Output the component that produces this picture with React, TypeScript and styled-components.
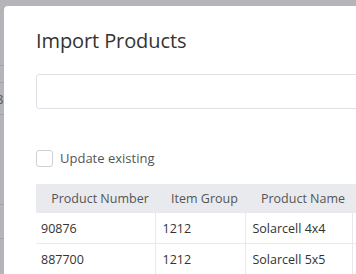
import React from "react";
import styled, { createGlobalStyle } from "styled-components";

const GlobalStyle = createGlobalStyle`
  html, body {
    margin: 0;
    padding: 0;
    overflow: hidden;
    background: #b5b5b9;
    font-family: "Open Sans", "Noto Sans", sans-serif;
  }
`;

const Screen = styled.div`
  position: relative;
  width: 356px;
  height: 274px;
  overflow: hidden;
`;

// page behind the overlay, only a strip of it is visible
const PageBehind = styled.div`
  display: flex;
  flex-direction: column;
  width: 100%;
`;

const PageRow = styled.div<{ $h: number }>`
  height: ${({ $h }) => $h}px;
  border-bottom: 1px solid #a4a4a8;
  box-sizing: border-box;
  display: flex;
  align-items: center;
  font-size: 13px;
  color: #55555a;
  overflow: hidden;
`;

const PageCell = styled.span`
  margin-left: -4px;
`;

const Modal = styled.div`
  position: absolute;
  left: 4px;
  top: 6px;
  width: 720px;
  height: 400px;
  background: #fff;
  border-radius: 4px 0 0 0;
  padding: 0 0 0 32px;
  box-sizing: border-box;
  display: flex;
  flex-direction: column;
  align-items: stretch;
`;

const Title = styled.h2`
  margin: 21px 0 0;
  font-size: 20px;
  line-height: 28px;
  font-weight: 400;
  color: #333;
  letter-spacing: -0.1px;
`;

const FileField = styled.div`
  margin-top: 19px;
  height: 35px;
  border: 1px solid #e0e0e6;
  border-radius: 3px;
  box-sizing: border-box;
`;

const CheckRow = styled.label`
  display: flex;
  align-items: center;
  gap: 7px;
  margin-top: 40px;
  font-size: 13px;
  color: #555;
`;

const Box = styled.span`
  width: 17px;
  height: 17px;
  box-sizing: border-box;
  border: 1px solid #cfcfd4;
  border-radius: 3px;
  background: #fff;
`;

const Table = styled.table`
  align-self: flex-start;
  width: 476px;
  margin-top: 17px;
  border-collapse: collapse;
  table-layout: fixed;
  font-size: 12.5px;
`;

const Th = styled.th`
  height: 29px;
  padding: 0 6px 0 15px;
  background: #e9eaee;
  color: #555;
  font-weight: 400;
  text-align: center;
  white-space: nowrap;
  overflow: hidden;
`;

const Td = styled.td<{ $first?: boolean }>`
  height: 30px;
  padding: 0 0 0 ${({ $first }) => ($first ? 5 : 7)}px;
  color: #333;
  border-bottom: 1px solid #e8e8ed;
  border-left: ${({ $first }) => ($first ? "none" : "1px solid #e8e8ed")};
  white-space: nowrap;
  overflow: hidden;
`;

const columns = [119, 90, 107, 160];

const rows = [
  { number: "90876", group: "1212", name: "Solarcell 4x4" },
  { number: "887700", group: "1212", name: "Solarcell 5x5" },
  { number: "", group: "", name: "" },
];

export default function App() {
  return (
    <Screen>
      <GlobalStyle />
      <PageBehind>
        <PageRow $h={66} />
        <PageRow $h={17} />
        <PageRow $h={32}>
          <PageCell>8</PageCell>
        </PageRow>
        <PageRow $h={90} />
        <PageRow $h={34} />
      </PageBehind>
      <Modal>
        <Title>Import Products</Title>
        <FileField />
        <CheckRow>
          <Box />
          Update existing
        </CheckRow>
        <Table>
          <colgroup>
            {columns.map((w, i) => (
              <col key={i} style={{ width: w }} />
            ))}
          </colgroup>
          <thead>
            <tr>
              <Th>Product Number</Th>
              <Th>Item Group</Th>
              <Th>Product Name</Th>
              <Th />
            </tr>
          </thead>
          <tbody>
            {rows.map((r, i) => (
              <tr key={i}>
                <Td $first>{r.number}</Td>
                <Td>{r.group}</Td>
                <Td>{r.name}</Td>
                <Td />
              </tr>
            ))}
          </tbody>
        </Table>
      </Modal>
    </Screen>
  );
}
